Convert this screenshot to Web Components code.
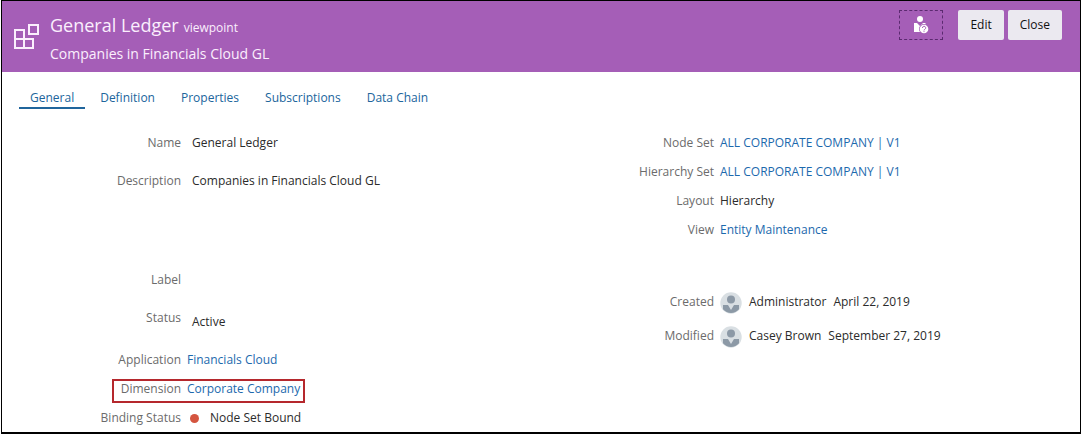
<!DOCTYPE html>
<html lang="en">
<head>
<meta charset="utf-8">
<title>General Ledger viewpoint</title>
<style>
  body {
    margin: 0;
    background: #fff;
    color: #2b2b2b;
    font: 12px/20px "Open Sans", "Noto Sans", sans-serif;
  }
</style>
</head>
<body>

<view-frame>
  <page-header slot="header" heading="General Ledger" kind="viewpoint" description="Companies in Financials Cloud GL">
    <help-button></help-button>
    <header-button>Edit</header-button>
    <header-button>Close</header-button>
  </page-header>

  <tab-bar slot="tabs">
    <tab-item selected>General</tab-item>
    <tab-item>Definition</tab-item>
    <tab-item>Properties</tab-item>
    <tab-item>Subscriptions</tab-item>
    <tab-item>Data Chain</tab-item>
  </tab-bar>

  <detail-column>
    <detail-field label="Name" type="text">General Ledger</detail-field>
    <detail-field label="Description" type="area">Companies in Financials Cloud GL</detail-field>
    <detail-field label="Label" type="text"></detail-field>
    <detail-field label="Status" type="select">Active</detail-field>
    <detail-field label="Application"><text-link>Financials Cloud</text-link></detail-field>
    <detail-field label="Dimension" highlight><text-link>Corporate Company</text-link></detail-field>
    <detail-field label="Binding Status"><status-dot>Node Set Bound</status-dot></detail-field>
  </detail-column>

  <detail-column>
    <detail-field label="Node Set"><text-link>ALL CORPORATE COMPANY | V1</text-link></detail-field>
    <detail-field label="Hierarchy Set"><text-link>ALL CORPORATE COMPANY | V1</text-link></detail-field>
    <detail-field label="Layout">Hierarchy</detail-field>
    <detail-field label="View" type="last"><text-link>Entity Maintenance</text-link></detail-field>
    <detail-field label="Created" type="audit"><user-stamp name="Administrator" date="April 22, 2019"></user-stamp></detail-field>
    <detail-field label="Modified" type="audit"><user-stamp name="Casey Brown" date="September 27, 2019"></user-stamp></detail-field>
  </detail-column>
</view-frame>

<script>
class ViewFrame extends HTMLElement {
  constructor() {
    super();
    this.attachShadow({ mode: 'open' });
  }

  connectedCallback() {
    this.shadowRoot.innerHTML = `
      <style>
        :host {
          display: block;
          margin: 0 3px 0 1px;
          border: 1px solid #000;
          border-bottom-width: 2px;
        }

        .details {
          display: grid;
          grid-template-columns: 1fr 1fr;
          padding: 24px 12px 4px 0;
        }
      </style>
      <slot name="header"></slot>
      <slot name="tabs"></slot>
      <main class="details"><slot></slot></main>
    `;
  }
}

class PageHeader extends HTMLElement {
  constructor() {
    super();
    this.attachShadow({ mode: 'open' });
  }

  connectedCallback() {
    this.shadowRoot.innerHTML = `
      <style>
        :host {
          display: block;
          background: #a55eb7;
          color: #fbeffd;
        }

        header {
          display: flex;
          align-items: flex-start;
          gap: 10px;
          padding: 9px 18px 4px 12px;
        }

        .icon {
          flex: none;
          margin-top: 14px;
        }

        .titles {
          flex: 1;
        }

        h1 {
          display: flex;
          align-items: baseline;
          gap: 5px;
          height: 30px;
          margin: 0;
          font-size: 18px;
          font-weight: 400;
          line-height: 30px;
        }

        h1 small {
          font-size: 12px;
        }

        p {
          margin: 0;
          font-size: 14px;
          line-height: 28px;
        }

        .actions {
          display: flex;
          gap: 4px;
        }
      </style>
      <header>
        <svg class="icon" width="26" height="26" viewBox="0 0 26 26" fill="none" stroke="currentColor" stroke-width="2">
          <path d="M1 6h9v18H1zM1 15h18v9H1zM15 1h9v9h-9z"/>
        </svg>
        <div class="titles">
          <h1><span>${this.getAttribute('heading')}</span> <small>${this.getAttribute('kind')}</small></h1>
          <p>${this.getAttribute('description')}</p>
        </div>
        <div class="actions"><slot></slot></div>
      </header>
    `;
  }
}

class HelpButton extends HTMLElement {
  constructor() {
    super();
    this.attachShadow({ mode: 'open' });
  }

  connectedCallback() {
    this.shadowRoot.innerHTML = `
      <style>
        :host {
          display: block;
          margin-right: 11px;
        }

        button {
          display: flex;
          align-items: center;
          justify-content: center;
          width: 44px;
          height: 30px;
          padding: 0;
          background: none;
          border: 1px dashed #5b2a70;
          color: #fff;
          cursor: pointer;
        }
      </style>
      <button aria-label="Contact">
        <svg width="16" height="18" viewBox="0 0 16 18">
          <circle cx="7" cy="3" r="3" fill="currentColor"/>
          <path d="M1 7h3l3 3 3-3h2l1 1v8H1z" fill="currentColor"/>
          <circle cx="11" cy="13" r="5" fill="#a55eb7"/>
          <circle cx="11" cy="13" r="4.3" fill="currentColor"/>
          <path d="M9.5 12a1.6 1.6 0 1 1 2.3 1.3q-.8.4-.8 1.1M11 15.2v.9" fill="none" stroke="#a55eb7"/>
        </svg>
      </button>
    `;
  }
}

class HeaderButton extends HTMLElement {
  constructor() {
    super();
    this.attachShadow({ mode: 'open' });
  }

  connectedCallback() {
    this.shadowRoot.innerHTML = `
      <style>
        :host {
          display: block;
        }

        button {
          height: 30px;
          padding: 0 12px;
          background: #ebe9f0;
          border: 0;
          border-radius: 2px;
          color: #111;
          font: inherit;
          font-size: 12px;
          cursor: pointer;
        }
      </style>
      <button><slot></slot></button>
    `;
  }
}

class TabBar extends HTMLElement {
  constructor() {
    super();
    this.attachShadow({ mode: 'open' });
  }

  connectedCallback() {
    this.shadowRoot.innerHTML = `
      <style>
        :host {
          display: block;
          padding: 16px 17px 0;
        }

        nav {
          display: flex;
          gap: 4px;
        }
      </style>
      <nav><slot></slot></nav>
    `;
  }
}

class TabItem extends HTMLElement {
  constructor() {
    super();
    this.attachShadow({ mode: 'open' });
  }

  connectedCallback() {
    this.shadowRoot.innerHTML = `
      <style>
        :host {
          display: block;
        }

        a {
          display: block;
          padding: 0 11px;
          border-bottom: 2px solid transparent;
          color: #20659c;
          line-height: 19px;
          text-decoration: none;
        }

        :host([selected]) a {
          border-color: #20659c;
        }
      </style>
      <a href="#"><slot></slot></a>
    `;
  }
}

class DetailColumn extends HTMLElement {
  constructor() {
    super();
    this.attachShadow({ mode: 'open' });
  }

  connectedCallback() {
    this.shadowRoot.innerHTML = `
      <style>
        :host {
          display: flex;
          flex-direction: column;
          gap: 9px;
        }
      </style>
      <slot></slot>
    `;
  }
}

class DetailField extends HTMLElement {
  constructor() {
    super();
    this.attachShadow({ mode: 'open' });
  }

  connectedCallback() {
    this.shadowRoot.innerHTML = `
      <style>
        :host {
          display: flex;
          position: relative;
          width: fit-content;
          gap: 6px;
        }

        .label {
          width: 179px;
          color: #6b6b6b;
          text-align: right;
        }

        :host([type="text"]),
        :host([type="area"]),
        :host([type="select"]) {
          gap: 11px;
          min-height: 29px;
        }

        :host([type="area"]) {
          min-height: 90px;
        }

        :host([type="select"]) {
          min-height: 33px;
        }

        :host([type="select"]) .value {
          padding-top: 4px;
        }

        :host([type="last"]) {
          padding-bottom: 43px;
        }

        :host([type="audit"]) {
          min-height: 25px;
        }

        /* callout drawn over the row */
        :host([highlight])::after {
          content: '';
          position: absolute;
          inset: 0 -5px -4px 110px;
          border: 2px solid #b5282d;
          pointer-events: none;
        }
      </style>
      <div class="label">${this.getAttribute('label')}</div>
      <div class="value"><slot></slot></div>
    `;
  }
}

class TextLink extends HTMLElement {
  constructor() {
    super();
    this.attachShadow({ mode: 'open' });
  }

  connectedCallback() {
    this.shadowRoot.innerHTML = `
      <style>
        :host {
          display: inline;
        }

        a {
          color: #1c69ad;
          text-decoration: none;
        }
      </style>
      <a href="#"><slot></slot></a>
    `;
  }
}

class StatusDot extends HTMLElement {
  constructor() {
    super();
    this.attachShadow({ mode: 'open' });
  }

  connectedCallback() {
    this.shadowRoot.innerHTML = `
      <style>
        :host {
          display: flex;
          align-items: center;
          gap: 11px;
          padding-left: 3px;
        }

        .dot {
          width: 9px;
          height: 9px;
          background: #d4553f;
          border-radius: 50%;
        }
      </style>
      <span class="dot"></span>
      <span><slot></slot></span>
    `;
  }
}

class UserStamp extends HTMLElement {
  constructor() {
    super();
    this.attachShadow({ mode: 'open' });
  }

  connectedCallback() {
    this.shadowRoot.innerHTML = `
      <style>
        :host {
          display: flex;
          gap: 7px;
        }

        svg {
          display: block;
        }
      </style>
      <svg width="22" height="22" viewBox="0 0 22 22">
        <circle cx="11" cy="11" r="10.7" fill="#d9dfe3"/>
        <circle cx="11" cy="7.5" r="4" fill="#8c99a6"/>
        <path d="M3 13h5l3 5 3-5h5v4.3a10.4 10.4 0 0 1-16 0z" fill="#8c99a6"/>
      </svg>
      <span>${this.getAttribute('name')}</span>
      <span>${this.getAttribute('date')}</span>
    `;
  }
}

customElements.define('view-frame', ViewFrame);
customElements.define('page-header', PageHeader);
customElements.define('help-button', HelpButton);
customElements.define('header-button', HeaderButton);
customElements.define('tab-bar', TabBar);
customElements.define('tab-item', TabItem);
customElements.define('detail-column', DetailColumn);
customElements.define('detail-field', DetailField);
customElements.define('text-link', TextLink);
customElements.define('status-dot', StatusDot);
customElements.define('user-stamp', UserStamp);
</script>
</body>
</html>
